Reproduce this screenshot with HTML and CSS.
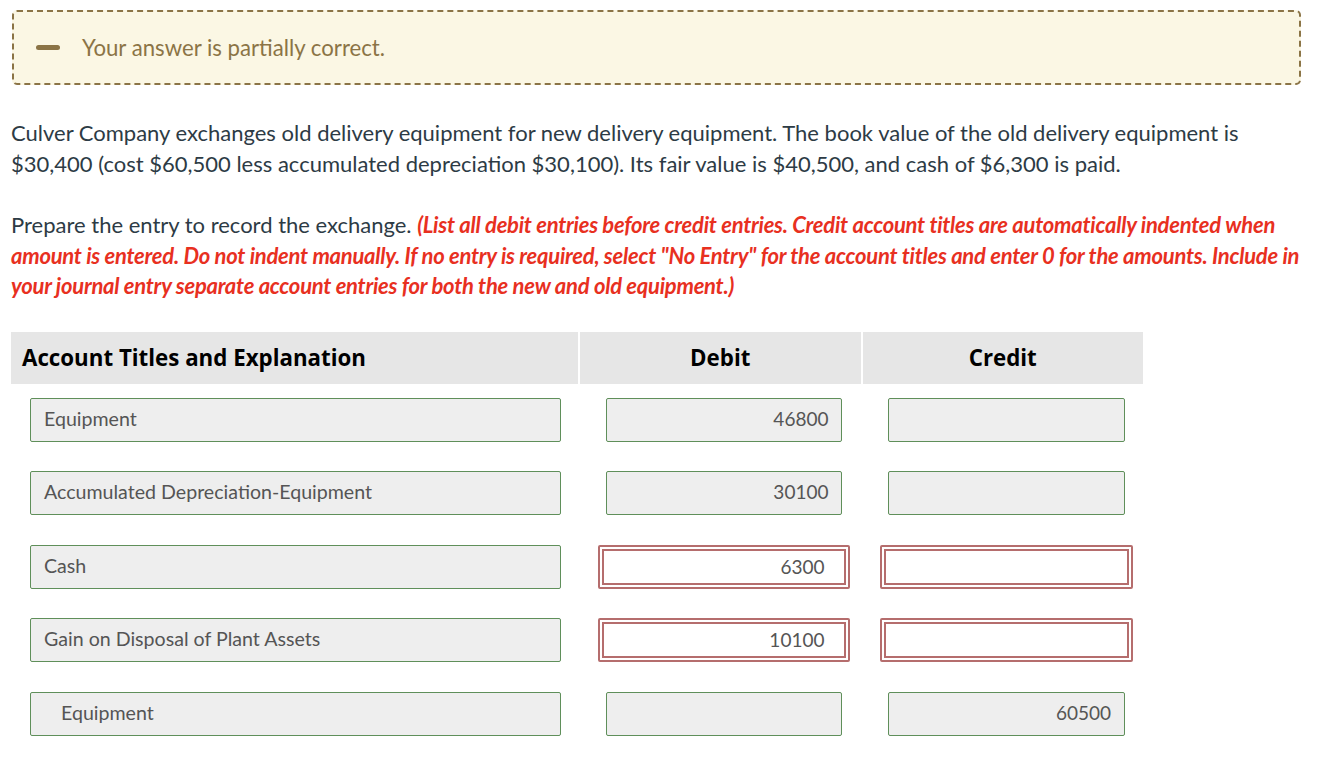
FILE: index.html
```html
<!DOCTYPE html>
<html lang="en">

<head>
    <meta charset="UTF-8">
    <title>Journal Entry</title>
    <link rel="stylesheet" href="styles.css">
</head>

<body>

    <!-- feedback banner -->
    <div class="feedback">
        <span class="feedback-icon"></span>
        <span class="feedback-text">Your answer is partially correct.</span>
    </div>

    <p class="question">Culver Company exchanges old delivery equipment for new delivery equipment. The book value of the old delivery equipment is $30,400 (cost $60,500 less accumulated depreciation $30,100). Its fair value is $40,500, and cash of $6,300 is paid.</p>

    <p class="question">Prepare the entry to record the exchange. <span class="hint">(List all debit entries before credit entries. Credit account titles are automatically indented when amount is entered. Do not indent manually. If no entry is required, select "No Entry" for the account titles and enter 0 for the amounts. Include in your journal entry separate account entries for both the new and old equipment.)</span></p>

    <!-- journal table -->
    <div class="journal">
        <div class="journal-head">
            <div class="col-title">Account Titles and Explanation</div>
            <div class="col-amount">Debit</div>
            <div class="col-amount">Credit</div>
        </div>

        <div class="journal-row">
            <div class="col-title"><div class="field">Equipment</div></div>
            <div class="col-amount"><div class="field num">46800</div></div>
            <div class="col-amount"><div class="field num"></div></div>
        </div>

        <div class="journal-row">
            <div class="col-title"><div class="field">Accumulated Depreciation-Equipment</div></div>
            <div class="col-amount"><div class="field num">30100</div></div>
            <div class="col-amount"><div class="field num"></div></div>
        </div>

        <div class="journal-row">
            <div class="col-title"><div class="field">Cash</div></div>
            <div class="col-amount"><div class="wrong"><div class="field num">6300</div></div></div>
            <div class="col-amount"><div class="wrong"><div class="field num"></div></div></div>
        </div>

        <div class="journal-row">
            <div class="col-title"><div class="field">Gain on Disposal of Plant Assets</div></div>
            <div class="col-amount"><div class="wrong"><div class="field num">10100</div></div></div>
            <div class="col-amount"><div class="wrong"><div class="field num"></div></div></div>
        </div>

        <div class="journal-row">
            <div class="col-title"><div class="field indent">Equipment</div></div>
            <div class="col-amount"><div class="field num"></div></div>
            <div class="col-amount"><div class="field num">60500</div></div>
        </div>
    </div>

</body>

</html>
```

FILE: styles.css
```css
body {
    margin: 0;
    padding: 10px 19px 0 11px;
    font-family: Lato, 'Open Sans', sans-serif;
    color: #2d3b45;
    background: #fff;
}

.feedback {
    display: flex;
    align-items: center;
    height: 75px;
    margin-left: 1px;
    border: 2px dashed #8b7446;
    border-radius: 5px;
    background-color: #fbf7e4;
    box-sizing: border-box;
}

.feedback-icon {
    width: 24px;
    height: 5px;
    margin: 0 22px 0 22px;
    border-radius: 3px;
    background-color: #8b7446;
}

.feedback-text {
    font-size: 22.2px;
    color: #8b7446;
}

.question {
    margin: 0;
    font-size: 22px;
    line-height: 30.5px;
}

.feedback + .question {
    margin-top: 33px;
}

.question + .question {
    margin-top: 31px;
}

.hint {
    color: #e8301f;
    font-weight: 700;
    font-style: italic;
    letter-spacing: -0.25px;
}

.journal {
    width: 1132px;
    margin-top: 30px;
}

.journal-head {
    display: flex;
    height: 52px;
    align-items: center;
    gap: 2px;
}

.journal-head > div {
    height: 100%;
    display: flex;
    align-items: center;
    justify-content: center;
    background-color: #e6e6e6;
    font-family: 'Open Sans', sans-serif;
    font-weight: 700;
    font-size: 22.3px;
    color: #000;
}

.journal-head > .col-title {
    justify-content: flex-start;
    padding-left: 11px;
    box-sizing: border-box;
}

.col-title {
    width: 568px;
}

.col-amount {
    width: 281px;
}

.journal-row {
    display: flex;
    gap: 2px;
    margin-top: 14px;
}

.journal-row + .journal-row {
    margin-top: 29.5px;
}

.journal-row > .col-title {
    padding: 0 17px 0 19px;
    box-sizing: border-box;
}

.journal-row > .col-amount {
    padding: 0 18px 0 26px;
    box-sizing: border-box;
}

.field {
    height: 44px;
    line-height: 40px;
    padding: 0 13px;
    border: 1.5px solid #5f8f5a;
    border-radius: 2px;
    background-color: #eeeeee;
    font-size: 19.6px;
    color: #555;
    box-sizing: border-box;
    white-space: nowrap;
}

.field.num {
    font-size: 19px;
}

.field.indent {
    padding-left: 30px;
}

.num {
    text-align: right;
}

.wrong {
    margin: 0 -8px;
    padding: 2px;
    height: 44px;
    border: 2px solid #b56d6d;
    border-radius: 2px;
    box-sizing: border-box;
}

.wrong .field {
    height: 36px;
    line-height: 32px;
    padding-right: 20px;
    border: 2px solid #b56d6d;
    border-radius: 0;
    background-color: #fff;
}
```
